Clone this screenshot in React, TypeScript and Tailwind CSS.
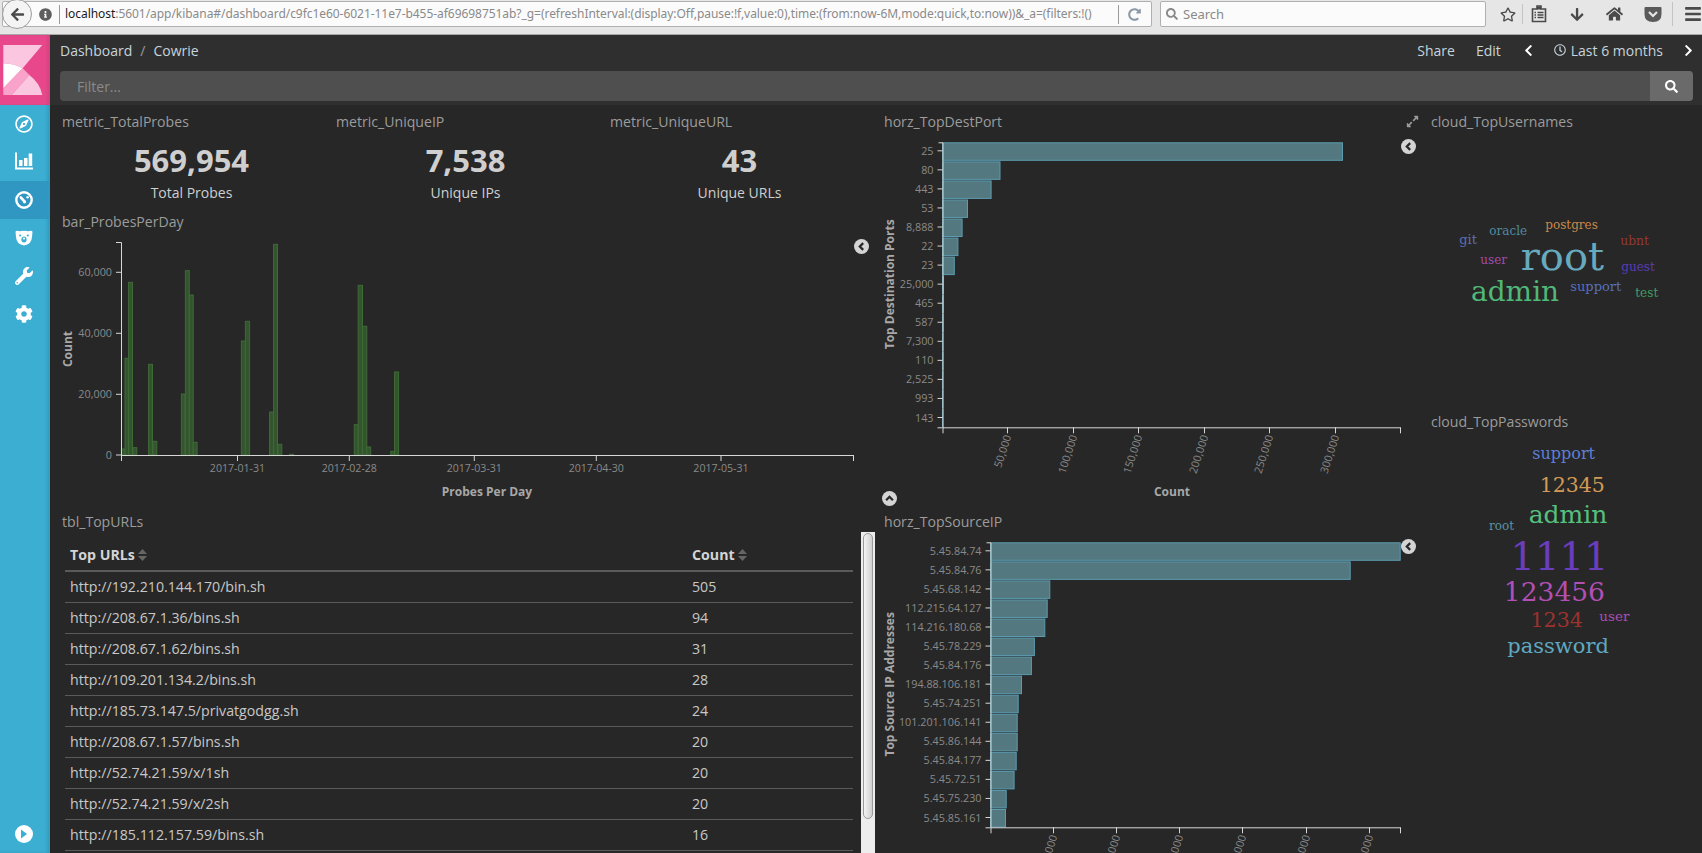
import React from 'react';
import { FaRegCompass, FaWrench, FaCog, FaSearch, FaChevronLeft, FaChevronRight, FaRegClock, FaRegStar, FaHome, FaArrowDown, FaArrowLeft, FaInfoCircle, FaRedoAlt, FaBars, FaExpandAlt } from 'react-icons/fa';

const probeBars: [number, number, number][] = [
  [121.4, 125, 717], [125, 128.6, 445], [128.6, 132.5, 217], [132.9, 136.8, 713],
  [148.6, 152.5, 463], [152.9, 156.8, 694], [181.4, 185, 552], [185.4, 189.3, 182],
  [189.3, 193.2, 255], [193.2, 197.1, 697], [241.4, 245.4, 393], [245.4, 249.6, 334],
  [269.6, 273.6, 606], [273.6, 277.5, 103], [277.9, 281.8, 703], [289.6, 293.6, 733],
  [354.3, 358.2, 644], [358.2, 362.5, 226], [362.5, 366.8, 349], [366.8, 370.7, 711],
  [390.7, 394.6, 724], [394.6, 398.6, 486],
];

const ports: [string, number][] = [
  ['25', 400], ['80', 57.5], ['443', 48.6], ['53', 25], ['8,888', 19.6], ['22', 15.4], ['23', 11.8],
  ['25,000', 1], ['465', 0.8], ['587', 0.6], ['7,300', 0.3], ['110', 0.3], ['2,525', 0.2], ['993', 0.2], ['143', 0.2],
];

const sourceIps: [string, number][] = [
  ['5.45.84.74', 409.7], ['5.45.84.76', 359.7], ['5.45.68.142', 59.3], ['112.215.64.127', 56.7],
  ['114.216.180.68', 54.3], ['5.45.78.229', 43.9], ['5.45.84.176', 40.9], ['194.88.106.181', 31],
  ['5.45.74.251', 27.7], ['101.201.106.141', 26.7], ['5.45.86.144', 26.7], ['5.45.84.177', 25.7],
  ['5.45.72.51', 23.6], ['5.45.75.230', 15.7], ['5.45.85.161', 15],
];

const topUrls: [string, number][] = [
  ['http://192.210.144.170/bin.sh', 505],
  ['http://208.67.1.36/bins.sh', 94],
  ['http://208.67.1.62/bins.sh', 31],
  ['http://109.201.134.2/bins.sh', 28],
  ['http://185.73.147.5/privatgodgg.sh', 24],
  ['http://208.67.1.57/bins.sh', 20],
  ['http://52.74.21.59/x/1sh', 20],
  ['http://52.74.21.59/x/2sh', 20],
  ['http://185.112.157.59/bins.sh', 16],
];

type Word = [string, number, number, number, string];

// x from the panel's left edge, y from its top
const userWords: Word[] = [
  ['git', 34.3, 112, 13, '#5b6fb5'],
  ['oracle', 64.3, 102.7, 12, '#508ca0'],
  ['postgres', 120.3, 96.7, 12, '#c8894e'],
  ['ubnt', 195.3, 112.7, 12.3, '#923a32'],
  ['user', 55.3, 131.7, 12, '#a34da6'],
  ['root', 95.7, 138.3, 40, '#67a9bf'],
  ['guest', 196.3, 138.7, 12, '#5b3bb3'],
  ['admin', 46, 169.3, 28, '#50b878'],
  ['support', 145.3, 159.3, 13, '#5670bb'],
  ['test', 210.3, 164.7, 12, '#3f9e62'],
];

const passwordWords: Word[] = [
  ['support', 107.3, 27, 16, '#5e7fd6'],
  ['12345', 114.7, 60, 20.5, '#d29a55'],
  ['admin', 103.7, 90.7, 25, '#55c07f'],
  ['root', 64, 97.7, 12, '#5a93a5'],
  ['1111', 85.5, 138, 38.5, '#6a3dbd'],
  ['123456', 78.8, 168.7, 26.5, '#b24fb5'],
  ['1234', 105.5, 195.3, 20.6, '#9c332e'],
  ['user', 174.3, 189, 13.5, '#a84fb0'],
  ['password', 82.3, 220.7, 21, '#5fa8c0'],
];

const KibanaLogo = () => (
  <svg width="50" height="65" viewBox="0 0 50 65">
    <path d="M3.3 5H42.3L22.7 28.3Q14 23.5 3.3 23.3Z" fill="#fbc6df" />
    <path d="M3.3 23.3Q14 23.5 22.7 28.3L3.3 48.3Z" fill="#ffffff" />
    <path d="M3.3 48.3L22.7 28.3L29.3 35L11.7 55H3.3Z" fill="#f9a3ca" />
    <path d="M11.7 55L29.3 35Q40 43 42.3 55Z" fill="#fbc6df" />
  </svg>
);

const BarChartIcon = () => (
  <svg width="18" height="18" viewBox="0 0 18 18" fill="#fff">
    <path d="M0 0.5H2V15.5H18V17.5H0Z" />
    <rect x="4" y="8" width="3.5" height="6" />
    <rect x="9" y="6" width="3.5" height="8" />
    <rect x="13.7" y="1.5" width="3.5" height="12.5" />
  </svg>
);

const DashIcon = () => (
  <svg width="18" height="18" viewBox="0 0 18 18">
    <circle cx="9" cy="9" r="7.7" fill="none" stroke="#fff" strokeWidth="2.4" />
    <path d="M5.8 6.5L9.5 10.5" stroke="#fff" strokeWidth="2.6" strokeLinecap="round" />
    <circle cx="12.6" cy="6.2" r="1.2" fill="#fff" />
    <circle cx="9.5" cy="10.8" r="1.6" fill="#fff" />
  </svg>
);

const BearIcon = () => (
  <svg width="18" height="16" viewBox="0 0 18 16">
    <path d="M0.5 1.5Q2 0 4 1.2Q9 0.2 14 1.2Q16 0 17.5 1.5L17 7Q16.5 14.5 9 15.5Q1.5 14.5 1 7Z" fill="#fff" />
    <circle cx="5.2" cy="5.5" r="1.1" fill="#3caed2" />
    <circle cx="12.8" cy="5.5" r="1.1" fill="#3caed2" />
    <ellipse cx="9" cy="9.5" rx="2.6" ry="3" fill="#3caed2" />
    <circle cx="9" cy="8.5" r="1.1" fill="#fff" />
  </svg>
);

const ClipboardIcon = () => (
  <svg width="16" height="18" viewBox="0 0 16 18">
    <path d="M1.5 4H6V1H10V4H14.5V16.5H1.5Z" fill="none" stroke="#4a4a4a" strokeWidth="1.6" />
    <path d="M6 1.5H10V4.5H6Z" fill="#4a4a4a" />
    <path d="M3.5 7.5H5M3.5 10H5M3.5 12.5H5M6.5 7.5H12.5M6.5 10H12.5M6.5 12.5H12.5" stroke="#4a4a4a" strokeWidth="1.5" />
  </svg>
);

const PocketIcon = () => (
  <svg width="18" height="17" viewBox="0 0 18 17">
    <path d="M1.5 1H16.5Q17.5 1 17.5 2V8Q17.5 16 9 16Q0.5 16 0.5 8V2Q0.5 1 1.5 1Z" fill="#5a5a5a" />
    <path d="M5 6L9 10L13 6" fill="none" stroke="#e6e6e6" strokeWidth="2.2" />
  </svg>
);

const Collapse = ({ className, up }: { className: string; up?: boolean }) => (
  <div className={`absolute w-[15px] h-[15px] rounded-full bg-[#d4d4d4] flex items-center justify-center ${className}`}>
    <svg width="9" height="9" viewBox="0 0 8 8" fill="none" stroke="#272727" strokeWidth="2">
      <path d={up ? 'M1 5.5L4 2.5L7 5.5' : 'M5.5 1L2.5 4L5.5 7'} />
    </svg>
  </div>
);

const SortIcon = () => (
  <svg width="9" height="12" viewBox="0 0 9 12" fill="#666">
    <path d="M4.5 0L9 5H0Z" />
    <path d="M4.5 12L0 7H9Z" />
  </svg>
);

const PanelTitle = ({ children }: { children: React.ReactNode }) => (
  <div className="h-5 px-[6px] text-[14.1px] leading-5 text-[#9c9c9c] whitespace-nowrap">{children}</div>
);

const Metric = ({ title, value, label }: { title: string; value: string; label: string }) => (
  <div className="h-[100px] flex flex-col">
    <PanelTitle>{title}</PanelTitle>
    <div className="mt-[8px] pr-[3px] text-center text-[31px] leading-[40px] font-bold text-[#cfcfcf]">{value}</div>
    <div className="mt-[3px] pr-[3px] text-center text-[14px] leading-5 text-[#cfcfcf]">{label}</div>
  </div>
);

const axisStroke = '#d8d8d8';
const labelFill = '#8a8a8a';
const titleFill = '#a8a8a8';

const ProbesChart = () => {
  const yTicks = [[272.3, '60,000'], [333.3, '40,000'], [394.3, '20,000'], [455, '0']] as const;
  const xTicks = [[237.5, '2017-01-31'], [349.3, '2017-02-28'], [474.3, '2017-03-31'], [596.3, '2017-04-30'], [721, '2017-05-31']] as const;
  return (
    <svg width="822" height="280" viewBox="56 232 822 280" className="block" fontFamily="'Open Sans', sans-serif">
      {probeBars.map(([x1, x2, top], i) => {
        const y = 210 + top / 3;
        return <rect key={i} x={x1} y={y} width={x2 - x1} height={455 - y} fill="#33552d" stroke="#3f6a38" strokeWidth="1" />;
      })}
      <path d={`M121.5 242.5V455.5H853.5M116 242.5H121.5`} fill="none" stroke={axisStroke} strokeWidth="1" />
      {yTicks.map(([y, t]) => (
        <g key={t}>
          <path d={`M116 ${y}H121.5`} stroke={axisStroke} />
          <text x="112" y={y + 4} textAnchor="end" fontSize="10.8" fill={labelFill}>{t}</text>
        </g>
      ))}
      <path d="M121.5 455V461" stroke={axisStroke} />
      {xTicks.map(([x, t]) => (
        <g key={t}>
          <path d={`M${x} 455V461`} stroke={axisStroke} />
          <text x={x} y="472" textAnchor="middle" fontSize="10.6" fill={labelFill}>{t}</text>
        </g>
      ))}
      <path d="M853.5 455V461" stroke={axisStroke} />
      <text x="487" y="496" textAnchor="middle" fontSize="12" fontWeight="700" fill={titleFill}>Probes Per Day</text>
      <text transform="translate(72 349) rotate(-90)" textAnchor="middle" fontSize="12" fontWeight="700" fill={titleFill}>Count</text>
    </svg>
  );
};

const HorizontalChart = ({
  data, x0, top, boxTop, boxHeight, yTitle, xTicks, xTitle,
}: {
  data: [string, number][]; x0: number; top: number; boxTop: number; boxHeight: number;
  yTitle: string; xTicks: [number, string][]; xTitle?: boolean;
}) => {
  const bottom = top + 285;
  return (
    <svg width="547" height={boxHeight} viewBox={`878 ${boxTop} 547 ${boxHeight}`} className="block" fontFamily="'Open Sans', sans-serif">
      {data.map(([name, w], i) => {
        const y = top + i * 19.05;
        return (
          <g key={name}>
            <rect x={x0} y={y + 0.5} width={w} height="17.5" fill="#53787f" stroke="#5c9bb0" strokeWidth="1" />
            <path d={`M${x0 - 5} ${y + 8.5}H${x0}`} stroke={axisStroke} />
            <text x={x0 - 9} y={y + 12.5} textAnchor="end" fontSize="10.8" fill={labelFill}>{name}</text>
          </g>
        );
      })}
      <path d={`M${x0 - 4} ${top + 0.5}H${x0 + 0.5}V${bottom + 0.5}H1400.5`} fill="none" stroke={axisStroke} />
      <path d={`M${x0 - 5} ${bottom + 0.5}H${x0}`} stroke={axisStroke} />
      <path d={`M${x0 + 0.5} ${bottom}V${bottom + 6}M1400.5 ${bottom}V${bottom + 6}`} stroke={axisStroke} />
      {xTicks.map(([x, t]) => (
        <g key={t}>
          <path d={`M${x} ${bottom}V${bottom + 6}`} stroke={axisStroke} />
          <text transform={`translate(${x + 4} ${bottom + 9}) rotate(-72)`} textAnchor="end" fontSize="10.8" fill={labelFill}>{t}</text>
        </g>
      ))}
      {xTitle && <text x="1172" y={bottom + 69} textAnchor="middle" fontSize="12" fontWeight="700" fill={titleFill}>Count</text>}
      <text transform={`translate(894 ${top + 142}) rotate(-90)`} textAnchor="middle" fontSize="12" fontWeight="700" fill={titleFill}>{yTitle}</text>
    </svg>
  );
};

const WordCloud = ({ words, height }: { words: Word[]; height: number }) => (
  <svg width="277" height={height} viewBox={`0 0 277 ${height}`} className="block" fontFamily="'DejaVu Serif', serif">
    {words.map(([t, x, y, size, color]) => (
      <text key={t} x={x} y={y} fontSize={size} fill={color}>{t}</text>
    ))}
  </svg>
);

export default function App() {
  return (
    <div className="h-[853px] w-[1702px] overflow-hidden flex flex-col bg-[#272727] font-['Open_Sans',sans-serif]">
      {/* browser toolbar */}
      <div className="relative h-[34.5px] shrink-0 flex items-center bg-[#e6e6e6] border-b border-[#a8a8a8] pb-[5px]">
        <div className="flex items-center h-[26px] flex-1 min-w-0 ml-[2px] mr-[8px] bg-[#fbfbfb] border border-[#b0b0b0] rounded-[2px]">
          <div className="-ml-[1px] w-[30px] h-[30px] rounded-full bg-[#f4f4f4] border border-[#9c9c9c] flex items-center justify-center shrink-0">
            <FaArrowLeft className="text-[#4a4a4a] text-[15px]" />
          </div>
          <FaInfoCircle className="ml-[7px] text-[#5e5e5e] text-[13px] shrink-0" />
          <div className="ml-[7px] w-px h-[19px] bg-[#9a9a9a] shrink-0" />
          <div className="ml-[5px] flex-1 min-w-0 text-[12px] tracking-[-0.05px] leading-[18px] whitespace-nowrap overflow-hidden text-[#8a8a8a] font-['Noto_Sans',sans-serif]">
            <span className="text-[#1c1c1c]">localhost</span>:5601/app/kibana#/dashboard/c9fc1e60-6021-11e7-b455-af69698751ab?_g=(refreshInterval:(display:Off,pause:!f,value:0),time:(from:now-6M,mode:quick,to:now))&amp;_a=(filters:!()
          </div>
          <div className="w-px h-[19px] bg-[#9a9a9a] shrink-0" />
          <FaRedoAlt className="ml-[9px] mr-[10px] text-[#8b98a5] text-[13px] shrink-0" />
        </div>
        <div className="flex items-center gap-[5px] w-[326px] h-[26px] shrink-0 bg-[#fbfbfb] border border-[#b0b0b0] rounded-[2px] px-[5px] text-[13px] text-[#8a8a8a] font-['Noto_Sans',sans-serif]">
          <FaSearch className="text-[#8a8a8a] text-[12px]" />
          <span>Search</span>
        </div>
        <div className="flex items-center w-[216px] shrink-0 pl-[14px] text-[#4a4a4a]">
          <FaRegStar className="text-[17px]" />
          <div className="ml-[6px] w-px h-[20px] bg-[#c4c4c4]" />
          <div className="ml-[8px]"><ClipboardIcon /></div>
          <FaArrowDown className="ml-[23px] text-[15px]" />
          <FaHome className="ml-[22px] text-[18px]" />
          <div className="ml-[21px]"><PocketIcon /></div>
          <div className="ml-[10px] w-px h-[24px] bg-[#c4c4c4]" />
          <FaBars className="ml-[11px] text-[18px] shrink-0" />
        </div>
      </div>

      <div className="relative flex flex-1 min-h-0">
        {/* sidebar */}
        <div className="w-[50px] shrink-0 flex flex-col bg-[#3caed2] shadow-[inset_-3px_0_3px_rgba(0,0,0,0.1)]">
          <div className="h-[70.5px] shrink-0 bg-[#e8488b] shadow-[inset_-3px_0_3px_rgba(0,0,0,0.08)] flex items-end">
            <KibanaLogo />
          </div>
          <div className="flex flex-col text-white text-[18px]">
            <div className="h-[38px] pr-[2px] flex items-center justify-center"><FaRegCompass /></div>
            <div className="h-[38px] pr-[2px] pb-[2px] flex items-center justify-center"><BarChartIcon /></div>
            <div className="h-[38px] pr-[2px] flex items-center justify-center bg-[#2f97c1]"><DashIcon /></div>
            <div className="h-[38px] pr-[2px] flex items-center justify-center"><BearIcon /></div>
            <div className="h-[38px] pr-[2px] flex items-center justify-center"><FaWrench /></div>
            <div className="h-[38px] pr-[2px] flex items-center justify-center"><FaCog /></div>
          </div>
          <div className="mt-auto mb-[10px] pr-[2px] flex justify-center">
            <div className="w-[18px] h-[18px] rounded-full bg-white flex items-center justify-center">
              <svg width="8" height="10" viewBox="0 0 8 10" fill="#3caed2"><path d="M1 0.5L7 5L1 9.5Z" /></svg>
            </div>
          </div>
        </div>

        {/* main */}
        <div className="relative flex-1 min-w-0 flex flex-col">
          <div className="h-[70.5px] shrink-0 bg-[#2f2f2f] pl-[10px] pr-[9px]">
            <div className="h-[36.5px] pb-[5px] -mr-[2px] flex items-center text-[14px] text-[#c6d4dc]">
              <span>Dashboard</span>
              <span className="mx-[8px] text-[#9c9c9c]">/</span>
              <span>Cowrie</span>
              <span className="ml-auto">Share</span>
              <span className="ml-[21px]">Edit</span>
              <FaChevronLeft className="ml-[21px] text-[13px] text-white" />
              <FaRegClock className="ml-[19px] text-[12px]" />
              <span className="ml-[5px]">Last 6 months</span>
              <FaChevronRight className="ml-[19px] text-[13px] text-white" />
            </div>
            <div className="h-[30px] flex rounded-[4px] overflow-hidden bg-[#4f4f4f]">
              <div className="flex-1 pl-[17px] flex items-center text-[14px] text-[#8a8a8a]">Filter...</div>
              <div className="w-[43px] bg-[#6a6a6a] flex items-center justify-center text-white text-[13px]"><FaSearch /></div>
            </div>
          </div>

          <div className="flex flex-1 min-h-0 pl-[6px] pt-[7px]">
            {/* left column */}
            <div className="w-[822px] shrink-0 flex flex-col">
              <div className="grid grid-cols-3">
                <Metric title="metric_TotalProbes" value="569,954" label="Total Probes" />
                <Metric title="metric_UniqueIP" value="7,538" label="Unique IPs" />
                <Metric title="metric_UniqueURL" value="43" label="Unique URLs" />
              </div>
              <PanelTitle>bar_ProbesPerDay</PanelTitle>
              <ProbesChart />
              <PanelTitle>tbl_TopURLs</PanelTitle>
              <div className="flex">
                <div className="w-[788px] ml-[9px] shrink-0 text-[14.2px] text-[#c8c8c8]">
                  <div className="h-[39.5px] pt-[8px] flex items-center border-b-2 border-[#5a5a5a] font-bold text-[#d4d4d4]">
                    <div className="w-[627px] pl-[5px] flex items-center gap-[3px]">Top URLs <SortIcon /></div>
                    <div className="flex items-center gap-[3px]">Count <SortIcon /></div>
                  </div>
                  {topUrls.map(([url, count]) => (
                    <div key={url} className="h-[31px] flex items-center border-b border-[#5a5a5a]">
                      <div className="w-[627px] pl-[5px]">{url}</div>
                      <div>{count}</div>
                    </div>
                  ))}
                </div>
                <div className="ml-[8px] w-[14px] h-[321px] shrink-0 bg-[#ededed] px-[2px] pt-px">
                  <div className="h-[286px] bg-gradient-to-r from-[#f4f4f4] to-[#cfcfcf] border border-[#9a9a9a] rounded-[5px]" />
                </div>
              </div>
            </div>

            {/* middle column */}
            <div className="w-[547px] shrink-0 flex flex-col">
              <PanelTitle>horz_TopDestPort</PanelTitle>
              <HorizontalChart
                data={ports} x0={942.5} top={142.3} boxTop={132} boxHeight={380}
                yTitle="Top Destination Ports" xTitle
                xTicks={[[1007.5, '50,000'], [1073.5, '100,000'], [1138.5, '150,000'], [1204.5, '200,000'], [1269.5, '250,000'], [1335.5, '300,000']]}
              />
              <PanelTitle>horz_TopSourceIP</PanelTitle>
              <HorizontalChart
                data={sourceIps} x0={990.5} top={542.3} boxTop={532} boxHeight={321}
                yTitle="Top Source IP Addresses"
                xTicks={[[1053.5, '50,000'], [1116.5, '100,000'], [1179.5, '150,000'], [1242.5, '200,000'], [1306.5, '250,000'], [1369.5, '300,000']]}
              />
            </div>

            {/* right column */}
            <div className="flex-1 min-w-0 flex flex-col">
              <PanelTitle>cloud_TopUsernames</PanelTitle>
              <WordCloud words={userWords} height={280} />
              <PanelTitle>cloud_TopPasswords</PanelTitle>
              <WordCloud words={passwordWords} height={260} />
            </div>
          </div>

          <FaExpandAlt className="absolute left-[1356px] top-[80px] text-[#9a9a9a] text-[13px]" />
          <Collapse className="left-[804px] top-[204px]" />
          <Collapse className="left-[1351px] top-[104px]" />
          <Collapse up className="left-[832px] top-[456px]" />
          <Collapse className="left-[1351px] top-[504px]" />
        </div>
      </div>
    </div>
  );
}
